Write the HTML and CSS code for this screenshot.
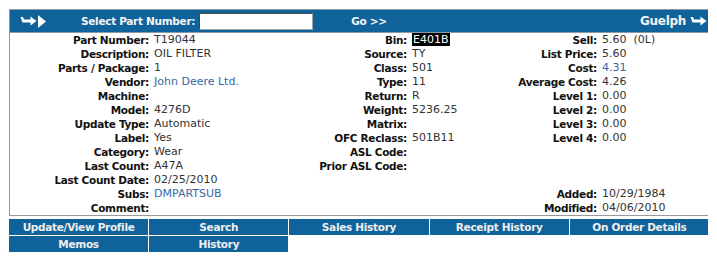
FILE: index.html
```html
<!DOCTYPE html>
<html lang="en">
<head>
    <meta charset="UTF-8">
    <title>Part Inquiry</title>
    <link rel="stylesheet" href="styles.css">
</head>
<body>
    <div class="page">
        <div class="topbar">
            <span class="nav-icons">
                <svg class="hook" width="17" height="12" viewBox="0 0 17 12"><path d="M0.5 2 L3 2 L4 4.5 L10.5 4.5 L10.5 1.5 L16.5 6 L10.5 10.5 L10.5 7.5 L2.5 7.5 Z" fill="#fff"/></svg>
                <svg class="tri" width="8" height="13" viewBox="0 0 8 13"><polygon points="0,0 8,6.5 0,13" fill="#fff"/></svg>
            </span>
            <label class="pick-label" for="partNo">Select Part Number:</label>
            <input id="partNo" class="pick-input" type="text" autofocus>
            <a class="go" href="#">Go &gt;&gt;</a>
            <span class="branch">Guelph</span>
            <svg class="hook" width="17" height="12" viewBox="0 0 17 12"><path d="M0.5 2 L3 2 L4 4.5 L10.5 4.5 L10.5 1.5 L16.5 6 L10.5 10.5 L10.5 7.5 L2.5 7.5 Z" fill="#fff"/></svg>
        </div>

        <div class="details">
            <dl class="col col-a">
                <dt>Part Number:</dt><dd>T19044</dd>
                <dt>Description:</dt><dd>OIL FILTER</dd>
                <dt>Parts / Package:</dt><dd>1</dd>
                <dt>Vendor:</dt><dd><a href="#">John Deere Ltd.</a></dd>
                <dt>Machine:</dt><dd></dd>
                <dt>Model:</dt><dd>4276D</dd>
                <dt>Update Type:</dt><dd>Automatic</dd>
                <dt>Label:</dt><dd>Yes</dd>
                <dt>Category:</dt><dd>Wear</dd>
                <dt>Last Count:</dt><dd>A47A</dd>
                <dt>Last Count Date:</dt><dd>02/25/2010</dd>
                <dt>Subs:</dt><dd><a href="#">DMPARTSUB</a></dd>
                <dt>Comment:</dt><dd></dd>
            </dl>
            <dl class="col col-b">
                <dt>Bin:</dt><dd><span class="picked">E401B</span></dd>
                <dt>Source:</dt><dd>TY</dd>
                <dt>Class:</dt><dd>501</dd>
                <dt>Type:</dt><dd>11</dd>
                <dt>Return:</dt><dd>R</dd>
                <dt>Weight:</dt><dd>5236.25</dd>
                <dt>Matrix:</dt><dd></dd>
                <dt>OFC Reclass:</dt><dd>501B11</dd>
                <dt>ASL Code:</dt><dd></dd>
                <dt>Prior ASL Code:</dt><dd></dd>
            </dl>
            <div class="col col-c">
                <dl class="pairs">
                    <dt>Sell:</dt><dd>5.60 &nbsp;(0L)</dd>
                    <dt>List Price:</dt><dd>5.60</dd>
                    <dt>Cost:</dt><dd><a href="#">4.31</a></dd>
                    <dt>Average Cost:</dt><dd>4.26</dd>
                    <dt>Level 1:</dt><dd>0.00</dd>
                    <dt>Level 2:</dt><dd>0.00</dd>
                    <dt>Level 3:</dt><dd>0.00</dd>
                    <dt>Level 4:</dt><dd>0.00</dd>
                </dl>
                <dl class="pairs stamps">
                    <dt>Added:</dt><dd>10/29/1984</dd>
                    <dt>Modified:</dt><dd>04/06/2010</dd>
                </dl>
            </div>
        </div>

        <div class="actions">
            <a href="#">Update/View Profile</a>
            <a href="#">Search</a>
            <a href="#">Sales History</a>
            <a href="#">Receipt History</a>
            <a href="#">On Order Details</a>
            <a href="#">Memos</a>
            <a href="#">History</a>
        </div>
    </div>
</body>
</html>
```

FILE: styles.css
```css
body {
    margin: 9px;
    font-family: "DejaVu Sans", Verdana, sans-serif;
    font-size: 11px;
    color: #333;
    background: #fff;
}
.page {
    width: 700px;
}
.topbar {
    display: flex;
    align-items: center;
    height: 22px;
    background-color: #10629b;
    border: 1px solid #8c9aa6;
    color: #f4f4f4;
    font-weight: bold;
    font-size: 10.5px;
    letter-spacing: -0.3px;
}
.nav-icons {
    display: flex;
    align-items: center;
    gap: 1px;
    margin-left: 10px;
    width: 61px;
}
.pick-input {
    box-sizing: border-box;
    width: 114px;
    height: 17px;
    margin-left: 4px;
    padding: 1px 2px;
    border: 1px solid #9aa5ae;
    border-top-color: #444;
    border-left-color: #444;
    border-radius: 0;
    font-size: 11px;
    outline: none;
}
.go {
    margin-left: 38px;
    color: #f4f4f4;
    text-decoration: none;
}
.branch {
    margin-left: auto;
    margin-right: 4px;
    font-size: 12px;
}
.topbar > .hook {
    margin-right: 1px;
}
.details {
    display: flex;
    border: 1px solid #999;
    border-top: none;
    height: 182px;
}
dl {
    margin: 0;
    display: grid;
    grid-auto-rows: 14px;
    line-height: 14px;
}
dt {
    font-weight: bold;
    font-size: 10.5px;
    letter-spacing: -0.3px;
    color: #111;
    text-align: right;
    white-space: nowrap;
}
dd {
    margin: 0;
    padding-left: 5px;
    white-space: nowrap;
}
dd a {
    color: #3768a3;
    text-decoration: none;
}
.col-a {
    width: 290px;
    grid-template-columns: 139px 1fr;
}
.col-b {
    width: 203px;
    grid-template-columns: 107px 1fr;
}
.col-c {
    flex: 1;
    display: flex;
    flex-direction: column;
}
.pairs {
    grid-template-columns: 94px 1fr;
}
.stamps {
    margin-top: auto;
}
.picked {
    background: #000;
    color: #fff;
    padding: 0 1px;
}
.actions {
    display: grid;
    grid-template-columns: repeat(5, 1fr);
    grid-auto-rows: 16px;
    gap: 1px;
    margin-top: 3px;
}
.actions a {
    background-color: #10629b;
    color: #eee;
    font-weight: bold;
    font-size: 10.5px;
    letter-spacing: -0.3px;
    text-align: center;
    line-height: 16px;
    text-decoration: none;
}
```
